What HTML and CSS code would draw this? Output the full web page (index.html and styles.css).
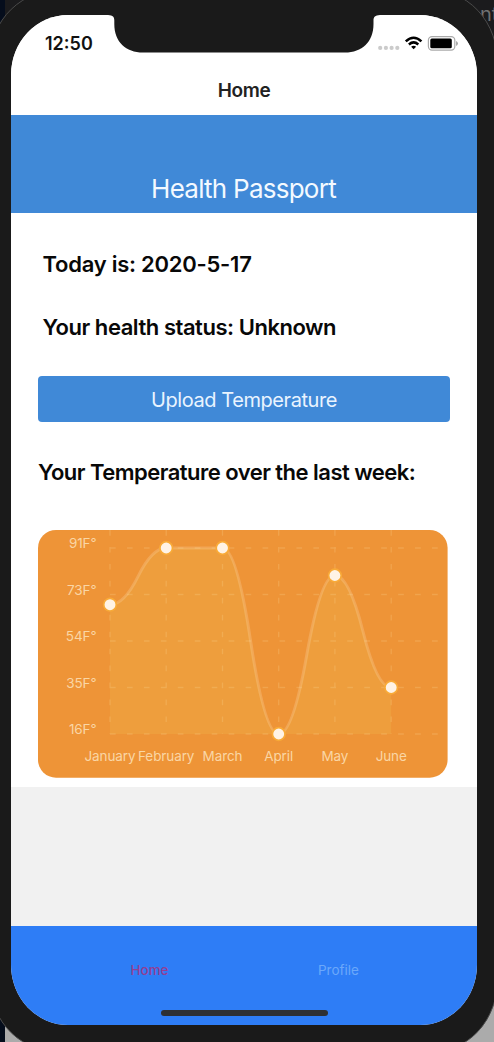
FILE: index.html
```html
<!DOCTYPE html>
<html lang="en">
<head>
<meta charset="utf-8">
<title>Health Passport</title>
<link rel="stylesheet" href="styles.css">
</head>
<body>
<div class="desktop">
  <span class="window-text">nt</span>
  <svg class="frame" width="494" height="1042" viewBox="0 0 494 1042" aria-hidden="true">
    <path d="M-10 62C-10 20 20-12 70-12H421C470-12 498 22 498 66V976C498 1020 470 1054 421 1054H70C20 1054-10 1022-10 980Z" fill="#1a1a1a" stroke="#4b4b4b"/>
  </svg>
  <main class="screen">
    <svg class="notch" width="272" height="38" viewBox="0 0 272 38" aria-hidden="true">
      <path d="M0 0C5 .2 6.300 2 6.300 5.500V9C6.300 27 18 37.500 35 37.500H237C254 37.500 265.500 27 265.500 9V5.500C265.500 2 267 .2 272 0Z" fill="#1a1a1a"/>
    </svg>
    <header class="top">
      <div class="status">
        <span class="time">12:50</span>
        <svg class="status-icons" width="82" height="18" viewBox="0 0 82 18" aria-hidden="true">
          <g fill="#cbcbcb"><circle cx="3.200" cy="12.900" r="2.100"/><circle cx="8.900" cy="12.900" r="2.100"/><circle cx="14.600" cy="12.900" r="2.100"/><circle cx="20.300" cy="12.900" r="2.100"/></g>
          <g fill="none" stroke="#000" stroke-width="2.500"><path d="M28.800 6.400Q36.600-.9 44.400 6.400"/><path d="M31.900 9.500Q36.600 5.300 41.300 9.500"/></g>
          <path d="M34.100 11.700Q36.600 9.600 39.100 11.700L36.600 14.300Z"/>
          <rect x="51.400" y="1.700" width="26.400" height="13.400" rx="3.600" fill="none" stroke="#aaa" stroke-width="1.200"/>
          <rect x="53.300" y="3.600" width="21.500" height="9.700" rx="1.500"/>
          <path d="M79.200 6V11Q80.800 10.200 80.800 8.500T79.200 6Z" fill="#999"/>
        </svg>
      </div>
      <h1 class="title">Home</h1>
    </header>
    <section class="banner"><span>Health Passport</span></section>
    <section class="content">
      <p class="line date">Today is: 2020-5-17</p>
      <p class="line health">Your health status: Unknown</p>
      <button class="upload"><span>Upload Temperature</span></button>
      <h2 class="line week">Your Temperature over the last week:</h2>
      <svg class="chart" width="410" height="248" viewBox="38 530 410 248">
        <rect x="38" y="530" width="409.600" height="247.700" rx="18" fill="#ee9437"/>
        <path fill="#f0b44c" fill-opacity=".32" d="M110 604.700Q124 604.700 138.100 576.300T166.200 548H222.500Q236.500 548 250.600 641T278.700 734Q292.800 734 306.800 654.700T334.900 575.500Q349 575.500 363 631.500T391.200 687.500V734H110Z"/>
        <path class="grid" d="M110 548H438M110 594.500H438M110 641H438M110 687.500H438M110 734H438M110 530V734M166.200 530V734M222.500 530V734M278.700 530V734M334.900 530V734M391.200 530V734"/>
        <path fill="none" stroke="#ffe7be" stroke-opacity=".23" stroke-width="3" d="M110 604.700Q124 604.700 138.100 576.300T166.200 548H222.500Q236.500 548 250.600 641T278.700 734Q292.800 734 306.800 654.700T334.900 575.500Q349 575.500 363 631.500T391.200 687.500"/>
        <g class="dots"><circle cx="110" cy="604.700" r="6.300"/><circle cx="166.200" cy="548" r="6.300"/><circle cx="222.500" cy="548" r="6.300"/><circle cx="278.700" cy="734" r="6.300"/><circle cx="334.900" cy="575.500" r="6.300"/><circle cx="391.200" cy="687.500" r="6.300"/></g>
        <g class="labels values"><text x="96.500" y="548.200">91F°</text><text x="96.500" y="594.700">73F°</text><text x="96.500" y="641.200">54F°</text><text x="96.500" y="687.700">35F°</text><text x="96.500" y="734.200">16F°</text></g>
        <g class="labels months"><text x="110" y="761.300">January</text><text x="166.200" y="761.300">February</text><text x="222.500" y="761.300">March</text><text x="278.700" y="761.300">April</text><text x="334.900" y="761.300">May</text><text x="391.200" y="761.300">June</text></g>
      </svg>
    </section>
    <nav class="tabs">
      <div class="tab-row"><a class="tab active">Home</a><a class="tab">Profile</a></div>
      <div class="home-indicator"></div>
    </nav>
  </main>
</div>
</body>
</html>
```
FILE: styles.css
```css
* { box-sizing: border-box; }
body { margin: 0; font-family: Inter, "Liberation Sans", sans-serif; }
.desktop {
  position: relative;
  width: 494px;
  height: 1042px;
  overflow: hidden;
  padding: 15px 17px 17px 11px;
  background:
    linear-gradient(#050d1c, #050d1c) 0 0 / 5px 100% no-repeat,
    linear-gradient(#1b1b1d 0 500px, #ababab 500px);
}
.window-text { position: absolute; left: 480px; top: 2px; font-size: 20px; line-height: 24px; color: #717171; }
.frame { position: absolute; left: 0; top: 0; }
.screen {
  position: relative;
  display: flex;
  flex-direction: column;
  height: 1010px;
  border-radius: 57px / 60px;
  overflow: hidden;
  background: #f1f1f1;
}
.notch { position: absolute; left: 97px; top: 0; }
.top { height: 100px; background: #fff; }
.status { display: flex; justify-content: space-between; align-items: center; height: 58px; padding: 0 18px 0 34px; }
.time { font-size: 18px; font-weight: 600; line-height: 20px; color: #111; }
.status-icons { flex: none; }
.title { margin: 6px 0 0; text-align: center; font-size: 19px; font-weight: 600; line-height: 24px; color: #222; letter-spacing: -.35px; }
.banner { height: 98px; padding: 57px 1px 0 0; background: #4089d7; color: #f3f9ff; text-align: center; font-size: 26px; line-height: 34px; letter-spacing: -.75px; }
.content { display: flex; flex-direction: column; height: 574px; padding: 0 27px; background: #fff; }
.line { margin: 0; font-size: 22px; font-weight: 600; line-height: 28px; color: #080808; white-space: nowrap; letter-spacing: -.46px; }
.date { margin: 37px 0 0 4.500px; letter-spacing: -.25px; }
.health { margin: 35px 0 0 4.500px; }
.upload { display: block; width: 412px; height: 46px; margin-top: 35px; padding: 1px 0 0; border: 0; border-radius: 4px; background: #4089d7; color: #e9f4ff; font: 400 20px/46px Inter, sans-serif; letter-spacing: -.43px; }
.week { margin-top: 36px; letter-spacing: -.53px; }
.chart { display: block; margin-top: 44px; }
.grid { fill: none; stroke: #ffe0a0; stroke-opacity: .22; stroke-width: 1.300; stroke-dasharray: 5.650 11.300; }
.dots { fill: #fff3e6; stroke: #f8aa38; stroke-width: 1.700; }
.labels { fill: #fad6a5; font-size: 13.500px; letter-spacing: -.1px; }
.values { text-anchor: end; }
.months { text-anchor: middle; }
.tabs { display: flex; flex-direction: column; justify-content: space-between; align-items: center; height: 99px; margin-top: auto; padding: 34px 0 9px; background: #2e7df6; }
.tab-row { display: grid; grid-template-columns: 189px 189px; width: 378px; }
.tab { text-align: center; font-size: 13.500px; line-height: 20px; color: #6ba8fa; }
.active { color: #933f94; font-weight: 500; }
.home-indicator { width: 167px; height: 6px; border-radius: 3px; background: #2e3033; }
```
